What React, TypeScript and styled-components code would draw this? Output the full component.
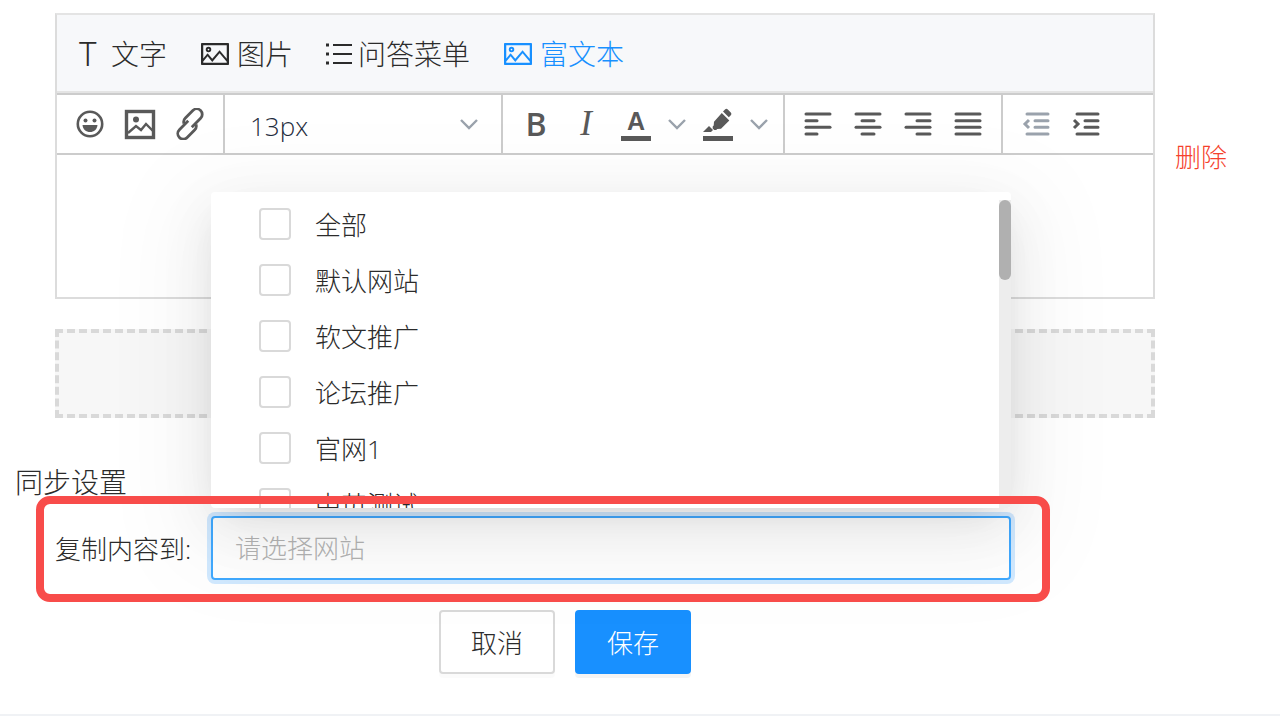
import React from 'react';
import styled, { createGlobalStyle } from 'styled-components';
import { AiOutlinePicture } from 'react-icons/ai';

const GlobalStyle = createGlobalStyle`
  html, body {
    margin: 0;
    height: 100%;
    overflow: hidden;
    background: #fff;
  }
  body {
    font-family: "Open Sans", "Noto Sans CJK SC", sans-serif;
    font-weight: 300;
    color: #2b2b2b;
  }
`;

const Page = styled.div`
  height: 716px;
  padding-top: 13px;
  box-sizing: border-box;
`;

const EditorRow = styled.div`
  display: flex;
  align-items: center;
  gap: 20px;
  margin-left: 55px;
`;

const EditorCard = styled.div`
  width: 1100px;
  box-sizing: border-box;
  border: 2px solid #dcdcdc;
  border-top-color: #e4e4e4;
`;

const Tabs = styled.div`
  display: flex;
  align-items: center;
  gap: 32px;
  height: 74px;
  padding: 2px 0 0 22px;
  background: #f7f8fa;
  border-bottom: 2px solid #e4e4e4;
`;

const Tab = styled.div<{ $active?: boolean }>`
  display: flex;
  align-items: center;
  gap: 6px;
  font-size: 28px;
  line-height: 40px;
  color: ${(p) => (p.$active ? '#1890ff' : '#2b2b2b')};
`;

const TabLetter = styled.span`
  font-family: "Noto Sans", sans-serif;
  font-weight: 300;
  font-size: 33px;
  width: 26px;
`;

const Toolbar = styled.div`
  display: flex;
  height: 58px;
  border-top: 2px solid #ccc;
  border-bottom: 2px solid #ccc;
`;

const ToolGroup = styled.div<{ $width: number; $last?: boolean }>`
  display: flex;
  align-items: center;
  box-sizing: border-box;
  width: ${(p) => p.$width}px;
  padding-left: 8px;
  border-right: ${(p) => (p.$last ? 'none' : '2px solid #ccc')};
`;

const ToolButton = styled.div<{ $w?: number }>`
  display: flex;
  align-items: center;
  justify-content: center;
  flex-direction: column;
  width: ${(p) => p.$w ?? 50}px;
  height: 100%;
  color: #595959;
`;

const SizeSelect = styled.div`
  display: flex;
  align-items: center;
  justify-content: space-between;
  flex: 1;
  padding: 0 22px 0 17px;
  font-size: 26px;
  line-height: 36px;
  color: #1f2d3d;
`;

const SizeText = styled.span`
  padding-top: 4px;
`;

const BoldLetter = styled.span`
  font-family: "Open Sans", sans-serif;
  font-weight: 600;
  font-size: 32px;
  line-height: 36px;
`;

const ItalicLetter = styled.span`
  font-family: "Liberation Serif", serif;
  font-style: italic;
  font-weight: 400;
  font-size: 35px;
  line-height: 36px;
`;

const ColorLetter = styled.span`
  font-family: "Liberation Sans", sans-serif;
  font-weight: 700;
  font-size: 25px;
  line-height: 25px;
  margin-top: 2px;
`;

const UnderBar = styled.span`
  display: block;
  width: 30px;
  height: 5px;
  margin-top: 2px;
  background: #595959;
`;

const EditorBody = styled.div`
  height: 142px;
  background: #fff;
`;

const DeleteLink = styled.span`
  font-size: 26px;
  color: #f5412d;
`;

const DropZone = styled.div`
  width: 1100px;
  height: 89px;
  box-sizing: border-box;
  margin: 30px 0 0 55px;
  border: 4px dashed #d9d9d9;
  background: #f7f7f7;
`;

const SectionTitle = styled.div`
  margin: 44px 0 0 15px;
  font-size: 28px;
  line-height: 40px;
`;

const FormRow = styled.div`
  position: relative;
  display: flex;
  align-items: center;
  height: 64px;
  margin-top: 14px;
  padding-left: 55px;
`;

const FormLabel = styled.label`
  width: 156px;
  font-size: 26px;
  color: #2b2b2b;
  white-space: nowrap;
`;

const SelectBox = styled.div`
  position: relative;
  width: 800px;
  height: 64px;
`;

const SelectInput = styled.div`
  box-sizing: border-box;
  height: 64px;
  padding-left: 22px;
  border: 2px solid #40a9ff;
  border-radius: 4px;
  box-shadow: 0 0 0 4px rgba(24, 144, 255, 0.2);
  font-size: 26px;
  line-height: 60px;
  color: #b4b4b4;
`;

const Dropdown = styled.div`
  position: absolute;
  left: 0;
  bottom: 72px;
  width: 800px;
  height: 316px;
  overflow: hidden;
  border-radius: 4px;
  background: #fff;
  box-shadow: 0 12px 32px -16px rgba(0, 0, 0, 0.1), 0 18px 56px 0 rgba(0, 0, 0, 0.08), 0 24px 96px 32px rgba(0, 0, 0, 0.04);
`;

const OptionList = styled.ul`
  margin: 0;
  padding: 4px 0 0 48px;
  list-style: none;
`;

const OptionRow = styled.li`
  display: flex;
  align-items: center;
  gap: 24px;
  height: 56px;
  font-size: 26px;
  color: #2b2b2b;
`;

const CheckBox = styled.span`
  box-sizing: border-box;
  width: 32px;
  height: 32px;
  border: 2px solid #d9d9d9;
  border-radius: 4px;
  background: #fff;
`;

const ScrollTrack = styled.div`
  position: absolute;
  top: 8px;
  right: 0;
  bottom: 0;
  width: 12px;
  background: #ededed;
`;

const ScrollThumb = styled.div`
  height: 80px;
  border-radius: 6px;
  background: #b0b0b0;
`;

const Annotation = styled.div`
  position: absolute;
  left: 36px;
  top: -20px;
  width: 1014px;
  height: 106px;
  box-sizing: border-box;
  border: 8px solid #f84c4a;
  border-radius: 14px;
  pointer-events: none;
`;

const Actions = styled.div`
  display: flex;
  gap: 20px;
  margin-top: 30px;
  padding-left: 439px;
`;

const ActionButton = styled.button<{ $primary?: boolean }>`
  box-sizing: border-box;
  width: 116px;
  height: 64px;
  padding: 0;
  border: 2px solid ${(p) => (p.$primary ? '#1890ff' : '#d9d9d9')};
  border-radius: 4px;
  background: ${(p) => (p.$primary ? '#1890ff' : '#fff')};
  box-shadow: 0 4px 0 rgba(0, 0, 0, ${(p) => (p.$primary ? 0.045 : 0.015)});
  font-family: inherit;
  font-weight: 300;
  font-size: 26px;
  color: ${(p) => (p.$primary ? '#fff' : '#2b2b2b')};
`;

const FooterLine = styled.div`
  margin-top: 40px;
  border-top: 2px solid #f0f2f5;
`;

const Chevron = () => (
  <svg width="20" height="12" viewBox="0 0 20 12" fill="none" stroke="#9aa2ac" strokeWidth="2.4">
    <path d="M2 2l8 8 8-8" />
  </svg>
);

const ListIcon = () => (
  <svg width="27" height="28" viewBox="0 0 27 28" fill="none" stroke="currentColor" strokeWidth="2.200">
    <path d="M8 5h19M8 14h19M8 23h19" />
    <path d="M1 5h3M1 14h3M1 23h3" strokeWidth="3" />
  </svg>
);

const SmileIcon = () => (
  <svg width="32" height="32" viewBox="0 0 32 32" fill="#595959">
    <circle cx="16" cy="16" r="12.2" fill="none" stroke="#595959" strokeWidth="2.6" />
    <circle cx="11.500" cy="12.500" r="2" />
    <circle cx="20.500" cy="12.500" r="2" />
    <path d="M8.500 17h15c-.4 4.400-3.600 7-7.500 7s-7.100-2.600-7.500-7z" />
  </svg>
);

const ImageIcon = () => (
  <svg width="32" height="32" viewBox="0 0 32 32" fill="none" stroke="#595959">
    <rect x="2.500" y="3.500" width="27" height="26" strokeWidth="3.400" />
    <circle cx="12" cy="11.500" r="3" fill="#595959" stroke="none" />
    <path d="M4 25l8-7 5 4 5-6 7 7" strokeWidth="2.400" />
  </svg>
);

const LinkIcon = () => (
  <svg width="32" height="32" viewBox="0 0 32 32" fill="none" stroke="#595959" strokeWidth="2.800">
    <g transform="rotate(-45 16 16)">
      <path d="M17 12.500H4.500a5.500 5.500 0 0 0 0 11H15a5.500 5.500 0 0 0 5-3" />
      <path d="M15 19.500h12.500a5.500 5.500 0 0 0 0-11H17a5.500 5.500 0 0 0-5 3" />
    </g>
  </svg>
);

const MarkerIcon = () => (
  <svg width="32" height="26" viewBox="0 0 32 26" fill="#595959">
    <path d="M21 3.500l2-2a2 2 0 0 1 2.800 0l3 3a2 2 0 0 1 0 2.800l-2 2zM19.800 5l7.500 7.500-8.300 8.300-3.800.300-1 1h-2l-1.500-1.500v-2l1-1 .300-3.800z" />
    <path d="M1 24l6-6 4 4-2 2z" />
  </svg>
);

const lineY = [6, 12.7, 19.3, 26];

const BarsIcon = ({ spans }: { spans: [number, number][] }) => (
  <svg width="32" height="32" viewBox="0 0 32 32" fill="none" stroke="currentColor" strokeWidth="3" strokeLinecap="round">
    {spans.map(([a, b], i) => (
      <line key={i} x1={a} x2={b} y1={lineY[i]} y2={lineY[i]} />
    ))}
  </svg>
);

const alignIcons: [number, number][][] = [
  [[4, 28], [4, 15], [4, 28], [4, 15]],
  [[4, 28], [10, 22], [4, 28], [10, 22]],
  [[4, 28], [15, 28], [4, 28], [15, 28]],
  [[4, 28], [4, 28], [4, 28], [4, 28]],
];

const OutdentIcon = () => (
  <svg width="32" height="32" viewBox="0 0 32 32" fill="none" stroke="#9aa2ac" strokeWidth="3" strokeLinecap="round">
    <path d="M7 6h21M15 12.700h13M15 19.300h13M7 26h21" />
    <path d="M9 12l-4 4 4 4" strokeLinecap="butt" />
  </svg>
);

const IndentIcon = () => (
  <svg width="32" height="32" viewBox="0 0 32 32" fill="none" stroke="#595959" strokeWidth="3" strokeLinecap="round">
    <path d="M7 6h21M15 12.700h13M15 19.300h13M7 26h21" />
    <path d="M4 12l4 4-4 4" strokeLinecap="butt" />
  </svg>
);

const sites = ['全部', '默认网站', '软文推广', '论坛推广', '官网1', '中英测试'];

export default function App() {
  return (
    <Page>
      <GlobalStyle />
      <EditorRow>
        <EditorCard>
          <Tabs>
            <Tab>
              <TabLetter>T</TabLetter>
              文字
            </Tab>
            <Tab>
              <AiOutlinePicture size={32} />
              图片
            </Tab>
            <Tab>
              <ListIcon />
              问答菜单
            </Tab>
            <Tab $active>
              <AiOutlinePicture size={32} />
              富文本
            </Tab>
          </Tabs>
          <Toolbar>
            <ToolGroup $width={168}>
              <ToolButton><SmileIcon /></ToolButton>
              <ToolButton><ImageIcon /></ToolButton>
              <ToolButton><LinkIcon /></ToolButton>
            </ToolGroup>
            <ToolGroup $width={278}>
              <SizeSelect>
                <SizeText>13px</SizeText>
                <Chevron />
              </SizeSelect>
            </ToolGroup>
            <ToolGroup $width={282}>
              <ToolButton><BoldLetter>B</BoldLetter></ToolButton>
              <ToolButton><ItalicLetter>I</ItalicLetter></ToolButton>
              <ToolButton>
                <ColorLetter>A</ColorLetter>
                <UnderBar />
              </ToolButton>
              <ToolButton $w={32}><Chevron /></ToolButton>
              <ToolButton>
                <MarkerIcon />
                <UnderBar />
              </ToolButton>
              <ToolButton $w={32}><Chevron /></ToolButton>
            </ToolGroup>
            <ToolGroup $width={218}>
              {alignIcons.map((spans, i) => (
                <ToolButton key={i}><BarsIcon spans={spans} /></ToolButton>
              ))}
            </ToolGroup>
            <ToolGroup $width={150} $last>
              <ToolButton><OutdentIcon /></ToolButton>
              <ToolButton><IndentIcon /></ToolButton>
            </ToolGroup>
          </Toolbar>
          <EditorBody />
        </EditorCard>
        <DeleteLink>删除</DeleteLink>
      </EditorRow>
      <DropZone />
      <SectionTitle>同步设置</SectionTitle>
      <FormRow>
        <FormLabel>复制内容到:</FormLabel>
        <SelectBox>
          <SelectInput>请选择网站</SelectInput>
          <Dropdown>
            <OptionList>
              {sites.map((name) => (
                <OptionRow key={name}>
                  <CheckBox />
                  {name}
                </OptionRow>
              ))}
            </OptionList>
            <ScrollTrack>
              <ScrollThumb />
            </ScrollTrack>
          </Dropdown>
        </SelectBox>
        <Annotation />
      </FormRow>
      <Actions>
        <ActionButton>取消</ActionButton>
        <ActionButton $primary>保存</ActionButton>
      </Actions>
      <FooterLine />
    </Page>
  );
}
